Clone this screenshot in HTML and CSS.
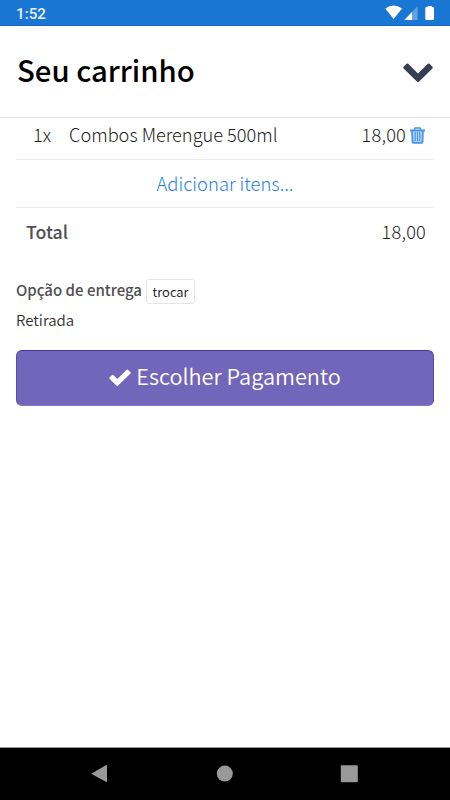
FILE: index.html
```html
<!DOCTYPE html>
<html lang="pt-BR">
<head>
<meta charset="utf-8">
<meta name="viewport" content="width=device-width, initial-scale=1">
<title>Seu carrinho</title>
<link rel="stylesheet" href="styles.css">
</head>
<body>
<div class="status">
  <span class="clock">1:52</span>
  <svg class="status-icons" width="52" height="16" viewBox="0 0 52 16">
    <path fill="#fff" d="M0.3 3.6Q8.6-2.6 17 3.6L8.6 14Z"/>
    <path fill="#62a2e4" d="M32.6 1.2V15H19.4Z"/>
    <path fill="#fff" d="M27 7V15H19.4Z"/>
    <path fill="#fff" d="M42.700 1H46.800V2H48Q49 2 49 3V14Q49 15 48 15H41.300Q40.300 15 40.300 14V3Q40.300 2 41.300 2H42.700Z"/>
  </svg>
</div>
<header class="header">
  <h1 class="title">Seu carrinho</h1>
  <svg class="chevron" width="30" height="20" viewBox="0 0 30 20">
    <path fill="#373d52" d="M.6 5.400Q-.2 4.500.6 3.700L3.500.8Q4.300 0 5.200.8L15 10.500 24.800.8Q25.700 0 26.500.8L29.400 3.700Q30.200 4.500 29.400 5.400L15.900 18.700Q15 19.500 14.100 18.700Z"/>
  </svg>
</header>
<main class="cart">
  <div class="row item">
    <span class="qty">1x</span>
    <span class="name">Combos Merengue 500ml</span>
    <span class="price">18,00</span>
    <svg class="trash" width="15" height="17" viewBox="0 0 15 17">
      <path fill="#4e97e8" fill-opacity=".3" d="M2 4H13L12.500 16H2.500Z"/>
      <g fill="none" stroke="#4593ec">
        <path stroke-width="1.500" d="M4.500 3V1.700Q4.500 1 5.200 1H9.800Q10.500 1 10.500 1.700V3"/>
        <path stroke-width="2" d="M0 3.500H15"/>
        <path stroke-width="1.900" d="M2.200 4L2.500 14.700Q2.500 15.800 3.500 15.800H11.500Q12.500 15.800 12.500 14.700L12.800 4"/>
        <path stroke-width="1.300" d="M5.200 5V14M7.500 5V14M9.800 5V14"/>
      </g>
    </svg>
  </div>
  <div class="row add"><a class="add-link">Adicionar itens...</a></div>
  <div class="row total"><strong class="total-label">Total</strong><span class="price">18,00</span></div>
  <section class="delivery">
    <div class="delivery-head"><strong class="delivery-label">Opção de entrega</strong><button class="change">trocar</button></div>
    <p class="method">Retirada</p>
  </section>
  <button class="pay">
    <svg class="check" width="22" height="18" viewBox="0 0 22 18"><path fill="#fff" d="M.5 9.800Q0 9.200.5 8.600L3.100 6Q3.700 5.500 4.300 6L8.300 10 17.700.7Q18.300.2 18.900.7L21.500 3.300Q22 3.900 21.500 4.500L8.900 16.700Q8.300 17.200 7.700 16.700Z"/></svg>
    <span class="pay-label">Escolher Pagamento</span>
  </button>
</main>
<nav class="navbar">
  <svg width="18" height="20" viewBox="0 0 18 20"><path fill="#999" d="M1.200 10.800 15.800 2.200Q17 1.600 17 2.700V18.300Q17 19.400 15.800 18.800L1.200 10.800Z"/></svg>
  <svg width="18" height="20" viewBox="0 0 18 20"><circle fill="#999" cx="9.800" cy="10.600" r="8"/></svg>
  <svg width="18" height="20" viewBox="0 0 18 20"><rect fill="#999" x=".8" y="2.200" width="17" height="17" rx="1"/></svg>
</nav>
</body>
</html>
```
FILE: styles.css
```css
* { box-sizing: border-box; }
body {
  margin: 0;
  height: 800px;
  display: flex;
  flex-direction: column;
  overflow: hidden;
  background: #fff;
  color: #303030;
  font-family: "Noto Sans CJK JP", sans-serif;
  font-size: 18px;
}
.status {
  height: 26px;
  flex: none;
  display: flex;
  justify-content: space-between;
  padding: 5px 13px 0 16px;
  background: #1976d2;
  border-bottom: 1px solid #1068c4;
}
.clock {
  font: 500 15.200px/18px Roboto, sans-serif;
  color: #e9f2fc;
}
.status-icons { flex: none; }
.header {
  height: 92px;
  flex: none;
  display: flex;
  justify-content: space-between;
  padding: 0 17px;
  border-bottom: 1px solid #dedede;
}
.title {
  margin: 23px 0 0;
  font-size: 29.300px;
  line-height: 40px;
  font-weight: 500;
  color: #000;
  white-space: nowrap;
}
.chevron { margin-top: 37px; }
.cart { flex: 1; padding: 0 16px; }
.row {
  height: 48px;
  display: flex;
  font-size: 18.200px;
  line-height: 24px;
  border-bottom: 1px solid #ebebeb;
  white-space: nowrap;
  font-weight: 300;
  color: #1c1c1c;
}
.item { height: 42px; padding: 4px 9px 0 17px; }
.qty { width: 36px; }
.name { flex: 1; }
.price { letter-spacing: .2px; }
.trash { margin: 5px 0 0 4px; }
.add { padding-top: 11px; justify-content: center; }
.add-link { color: #1f7fe6; font-size: 18.400px; }
.total {
  border: 0;
  padding: 11px 8px 0 10px;
  justify-content: space-between;
}
.total-label, .delivery-label { font-weight: 500; color: #505050; }
.total-label { font-size: 17.800px; }
.delivery { padding-top: 23px; white-space: nowrap; }
.delivery-head { display: flex; gap: 4px; height: 26px; line-height: 22px; font-size: 15px; }
.change {
  width: 49px;
  height: 25px;
  padding: 0;
  border: 1px solid #e4e4e4;
  border-radius: 3px;
  background: #fff;
  color: #101010;
  font: 350 13px/20px "Noto Sans CJK JP", sans-serif;
}
.method { margin: 3px 0 0; font-size: 15px; line-height: 24px; font-weight: 350; }
.pay {
  width: 418px;
  height: 56px;
  margin-top: 18px;
  padding: 0;
  display: flex;
  justify-content: center;
  gap: 5px;
  border: 1px solid #5a46b0;
  border-top-color: #4a31a6;
  border-bottom-color: #8476c4;
  border-radius: 6px;
  background: #7266ba;
  color: #fff;
  font: 350 21.700px/49px "Noto Sans CJK JP", sans-serif;
  white-space: nowrap;
}
.check { margin-top: 18px; }
.navbar {
  height: 53px;
  flex: none;
  display: flex;
  justify-content: space-between;
  padding: 15px 92px 0 90px;
  background: #000;
  border-top: 1px solid #999;
}
```
